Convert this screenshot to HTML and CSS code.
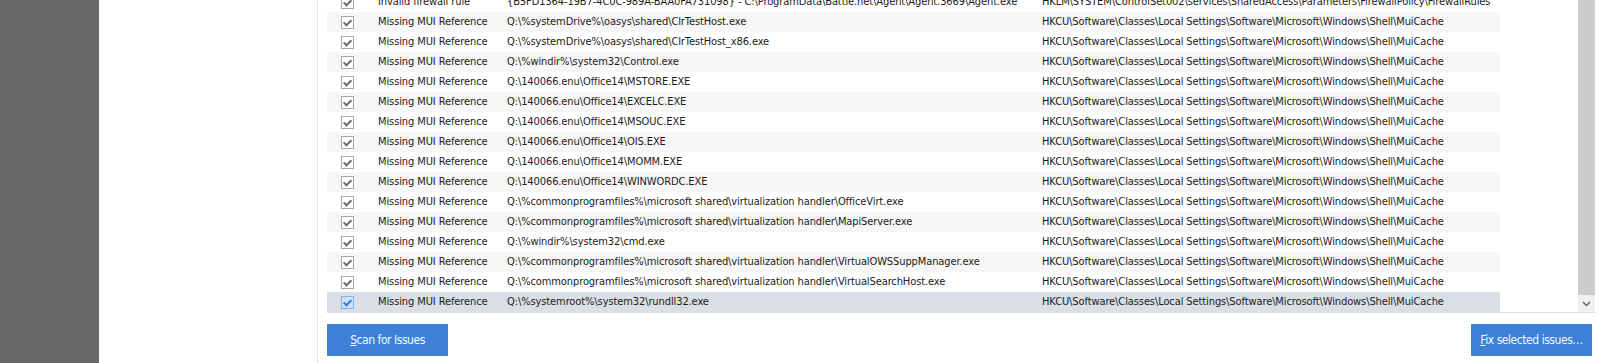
FILE: index.html
```html
<!DOCTYPE html>
<html>
  <head>
    <meta charset="utf-8">
    <title>Registry issues</title>
    <link rel="stylesheet" href="styles.css">
  </head>
  <body>
    <div class="app">
      <div class="sidebar"></div>
      <div class="gap"></div>
      <div class="panel">
        <div class="list">
          <div class="rows">
            <div class="row">
              <span class="cell check"><span class="box"></span></span>
              <span class="cell">Invalid firewall rule</span>
              <span class="cell">{B5FD1364-19B7-4C0C-989A-BAA0FA731098} - C:\ProgramData\Battle.net\Agent\Agent.3669\Agent.exe</span>
              <span class="cell">HKLM\SYSTEM\ControlSet002\services\SharedAccess\Parameters\FirewallPolicy\FirewallRules</span>
            </div>
            <div class="row">
              <span class="cell check"><span class="box"></span></span>
              <span class="cell">Missing MUI Reference</span>
              <span class="cell">Q:\%systemDrive%\oasys\shared\ClrTestHost.exe</span>
              <span class="cell">HKCU\Software\Classes\Local Settings\Software\Microsoft\Windows\Shell\MuiCache</span>
            </div>
            <div class="row">
              <span class="cell check"><span class="box"></span></span>
              <span class="cell">Missing MUI Reference</span>
              <span class="cell">Q:\%systemDrive%\oasys\shared\ClrTestHost_x86.exe</span>
              <span class="cell">HKCU\Software\Classes\Local Settings\Software\Microsoft\Windows\Shell\MuiCache</span>
            </div>
            <div class="row">
              <span class="cell check"><span class="box"></span></span>
              <span class="cell">Missing MUI Reference</span>
              <span class="cell">Q:\%windir%\system32\Control.exe</span>
              <span class="cell">HKCU\Software\Classes\Local Settings\Software\Microsoft\Windows\Shell\MuiCache</span>
            </div>
            <div class="row">
              <span class="cell check"><span class="box"></span></span>
              <span class="cell">Missing MUI Reference</span>
              <span class="cell">Q:\140066.enu\Office14\MSTORE.EXE</span>
              <span class="cell">HKCU\Software\Classes\Local Settings\Software\Microsoft\Windows\Shell\MuiCache</span>
            </div>
            <div class="row">
              <span class="cell check"><span class="box"></span></span>
              <span class="cell">Missing MUI Reference</span>
              <span class="cell">Q:\140066.enu\Office14\EXCELC.EXE</span>
              <span class="cell">HKCU\Software\Classes\Local Settings\Software\Microsoft\Windows\Shell\MuiCache</span>
            </div>
            <div class="row">
              <span class="cell check"><span class="box"></span></span>
              <span class="cell">Missing MUI Reference</span>
              <span class="cell">Q:\140066.enu\Office14\MSOUC.EXE</span>
              <span class="cell">HKCU\Software\Classes\Local Settings\Software\Microsoft\Windows\Shell\MuiCache</span>
            </div>
            <div class="row">
              <span class="cell check"><span class="box"></span></span>
              <span class="cell">Missing MUI Reference</span>
              <span class="cell">Q:\140066.enu\Office14\OIS.EXE</span>
              <span class="cell">HKCU\Software\Classes\Local Settings\Software\Microsoft\Windows\Shell\MuiCache</span>
            </div>
            <div class="row">
              <span class="cell check"><span class="box"></span></span>
              <span class="cell">Missing MUI Reference</span>
              <span class="cell">Q:\140066.enu\Office14\MOMM.EXE</span>
              <span class="cell">HKCU\Software\Classes\Local Settings\Software\Microsoft\Windows\Shell\MuiCache</span>
            </div>
            <div class="row">
              <span class="cell check"><span class="box"></span></span>
              <span class="cell">Missing MUI Reference</span>
              <span class="cell">Q:\140066.enu\Office14\WINWORDC.EXE</span>
              <span class="cell">HKCU\Software\Classes\Local Settings\Software\Microsoft\Windows\Shell\MuiCache</span>
            </div>
            <div class="row">
              <span class="cell check"><span class="box"></span></span>
              <span class="cell">Missing MUI Reference</span>
              <span class="cell">Q:\%commonprogramfiles%\microsoft shared\virtualization handler\OfficeVirt.exe</span>
              <span class="cell">HKCU\Software\Classes\Local Settings\Software\Microsoft\Windows\Shell\MuiCache</span>
            </div>
            <div class="row">
              <span class="cell check"><span class="box"></span></span>
              <span class="cell">Missing MUI Reference</span>
              <span class="cell">Q:\%commonprogramfiles%\microsoft shared\virtualization handler\MapiServer.exe</span>
              <span class="cell">HKCU\Software\Classes\Local Settings\Software\Microsoft\Windows\Shell\MuiCache</span>
            </div>
            <div class="row">
              <span class="cell check"><span class="box"></span></span>
              <span class="cell">Missing MUI Reference</span>
              <span class="cell">Q:\%windir%\system32\cmd.exe</span>
              <span class="cell">HKCU\Software\Classes\Local Settings\Software\Microsoft\Windows\Shell\MuiCache</span>
            </div>
            <div class="row">
              <span class="cell check"><span class="box"></span></span>
              <span class="cell">Missing MUI Reference</span>
              <span class="cell">Q:\%commonprogramfiles%\microsoft shared\virtualization handler\VirtualOWSSuppManager.exe</span>
              <span class="cell">HKCU\Software\Classes\Local Settings\Software\Microsoft\Windows\Shell\MuiCache</span>
            </div>
            <div class="row">
              <span class="cell check"><span class="box"></span></span>
              <span class="cell">Missing MUI Reference</span>
              <span class="cell">Q:\%commonprogramfiles%\microsoft shared\virtualization handler\VirtualSearchHost.exe</span>
              <span class="cell">HKCU\Software\Classes\Local Settings\Software\Microsoft\Windows\Shell\MuiCache</span>
            </div>
            <div class="row selected">
              <span class="cell check"><span class="box"></span></span>
              <span class="cell">Missing MUI Reference</span>
              <span class="cell">Q:\%systemroot%\system32\rundll32.exe</span>
              <span class="cell">HKCU\Software\Classes\Local Settings\Software\Microsoft\Windows\Shell\MuiCache</span>
            </div>
          </div>
          <div class="scrollbar">
            <div class="thumb"></div>
            <div class="arrow">
              <svg width="9" height="6" viewBox="0 0 9 6"><path d="M1 1 L4.5 4.5 L8 1" fill="none" stroke="#606060" stroke-width="1.4"/></svg>
            </div>
          </div>
        </div>
        <div class="actions">
          <button class="btn"><u>S</u>can for Issues</button>
          <button class="btn"><u>F</u>ix selected issues…</button>
        </div>
      </div>
    </div>
  </body>
</html>
```

FILE: styles.css
```css
body {
  margin: 0;
  font-family: "DejaVu Sans Condensed", "DejaVu Sans", sans-serif;
  font-stretch: condensed;
  font-size: 11px;
  letter-spacing: -0.1px;
  color: #1a1a1a;
  background: #fff;
}
.app {
  display: flex;
  height: 363px;
  overflow: hidden;
}
.sidebar {
  width: 99px;
  background: #686868;
}
.gap {
  width: 218px;
}
.panel {
  flex: 1;
  border-left: 1px solid #e3e3e3;
  padding: 0 4px 0 9px;
  display: flex;
  flex-direction: column;
}
.list {
  display: flex;
  height: 312px;
  border-bottom: 1px solid #dcdcdc;
  overflow: hidden;
}
.rows {
  flex: 1;
  margin-top: -8px;
}
.row {
  display: grid;
  grid-template-columns: 46px 129px 535px 463px;
  width: 1173px;
  height: 20px;
  line-height: 20px;
  white-space: nowrap;
}
.row:nth-child(even) {
  background: #f6f6f6;
}
.row.selected {
  background: #d9dfe5;
}
.cell {
  padding-left: 5px;
  overflow: hidden;
}
.check {
  padding-left: 14px;
  display: flex;
  align-items: center;
}
.box {
  width: 11px;
  height: 11px;
  border: 1px solid #a8a8a8;
  background: #fff;
  position: relative;
}
.box::after {
  content: "";
  position: absolute;
  left: 3px;
  top: 1px;
  width: 3px;
  height: 6px;
  border: solid #6a6a6a;
  border-width: 0 2px 2px 0;
  transform: rotate(45deg);
}
.selected .box {
  background: #cce4f7;
  border-color: #7eb4ea;
}
.selected .box::after {
  border-color: #2d7bd2;
}
.scrollbar {
  width: 17px;
  display: flex;
  flex-direction: column;
}
.thumb {
  flex: 1;
  background: #cdcdcd;
}
.arrow {
  height: 17px;
  background: #f0f0f0;
  display: flex;
  align-items: center;
  justify-content: center;
}
.actions {
  display: flex;
  justify-content: space-between;
  margin-top: 11px;
  padding-right: 3px;
}
.btn {
  width: 121px;
  height: 32px;
  border: none;
  background: #3d80d8;
  color: #f4f8fd;
  font-family: "DejaVu Sans Condensed", "DejaVu Sans", sans-serif;
  font-stretch: condensed;
  font-size: 12px;
  letter-spacing: -0.45px;
  padding: 0;
}
.btn u {
  text-decoration-thickness: 1px;
}
```
